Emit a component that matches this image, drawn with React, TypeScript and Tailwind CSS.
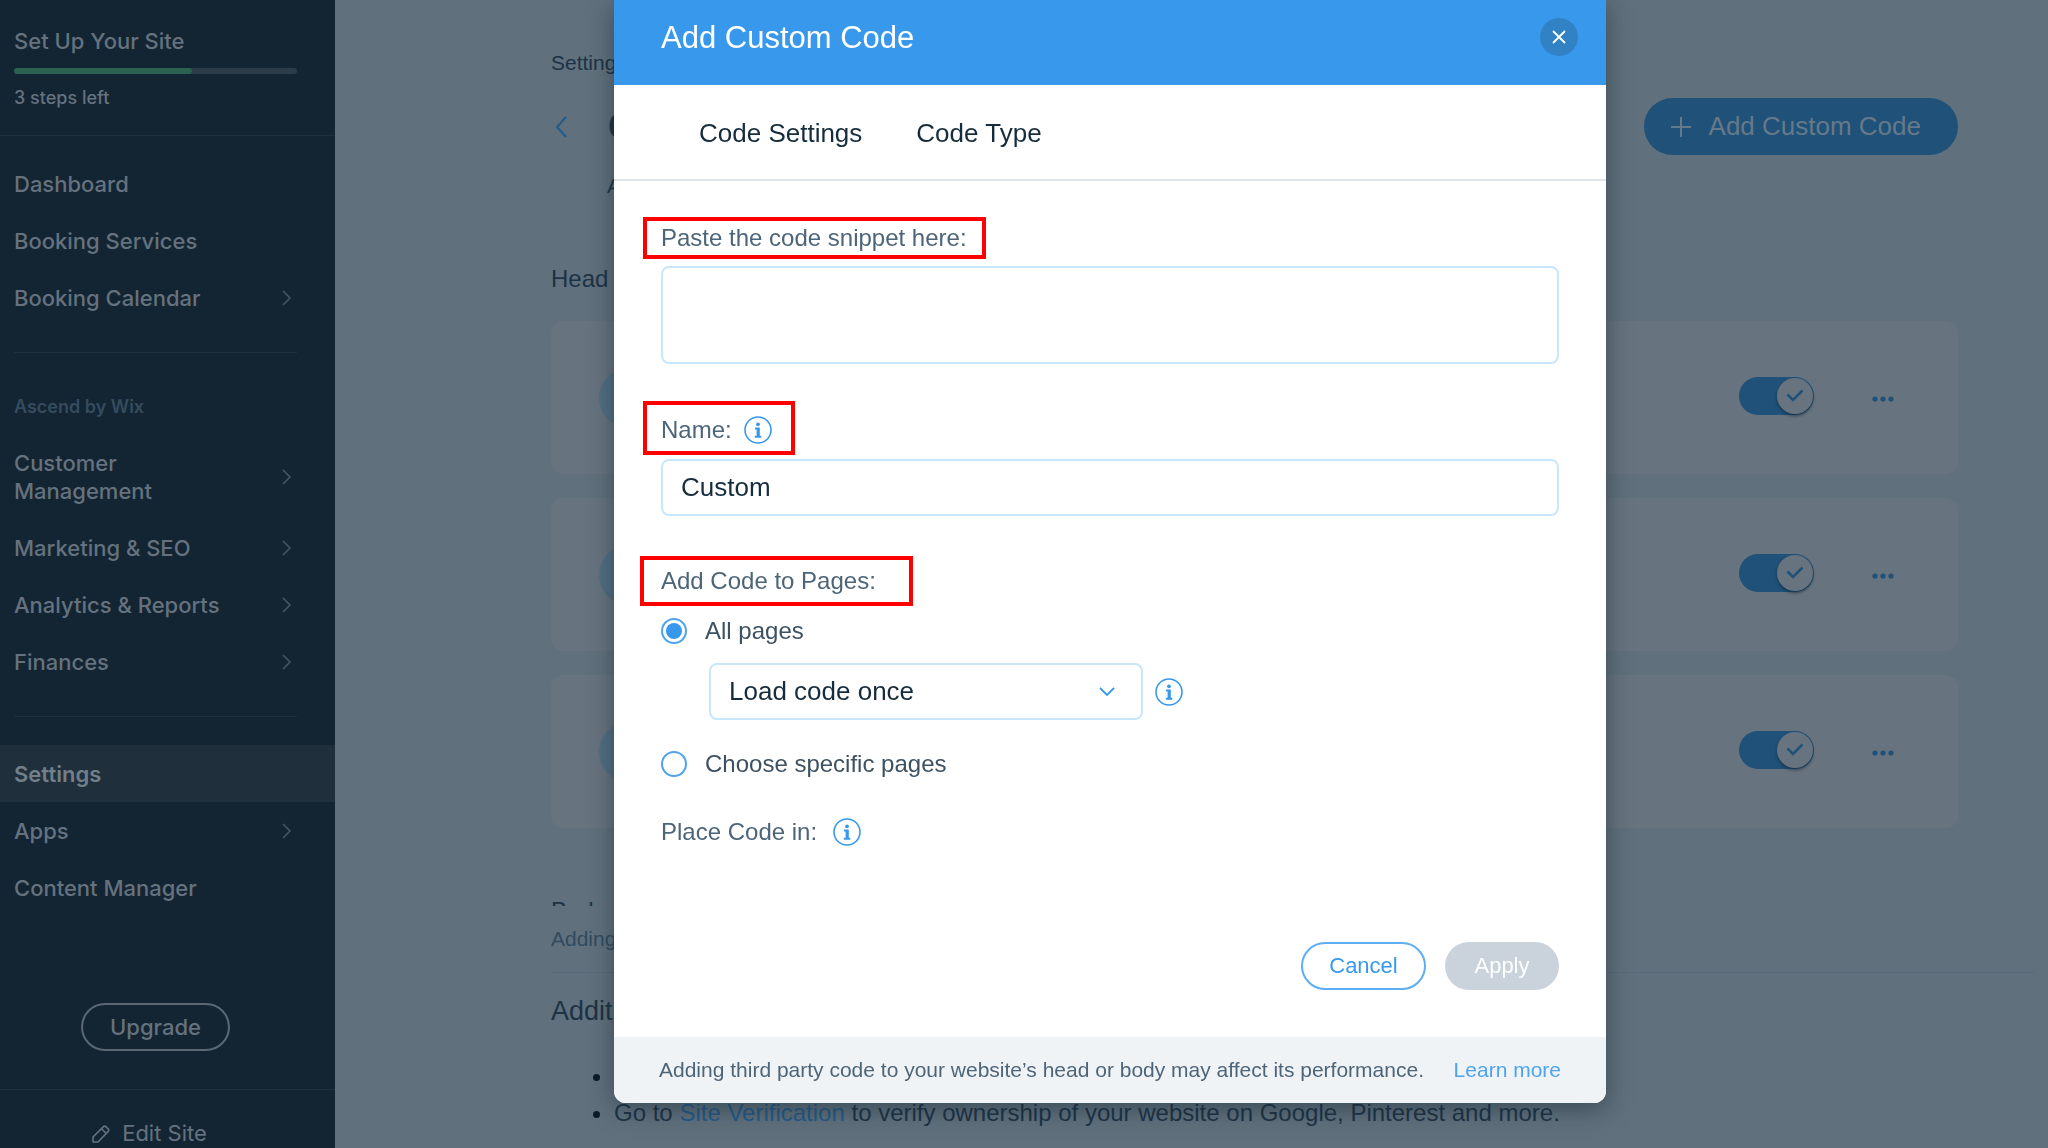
import {useState} from 'react'
import {clsx} from 'clsx'

interface NavItemProps {
	label: string
	hasChildren?: boolean
	active?: boolean
}

const NavItem = ({label, hasChildren, active}: NavItemProps) => (
	<a
		href="#"
		className={clsx(
			'flex min-h-[57px] items-center justify-between py-3.5 pr-[43px] pl-3.5 text-[22px] leading-7',
			active ? 'bg-[#1f2f3c] font-semibold text-[#717f8b]' : 'font-medium text-[#65727e]'
		)}
	>
		<span className="max-w-[210px]">{label}</span>
		{hasChildren && (
			<svg className="h-[18px] w-2.5 shrink-0 text-[#475663]" viewBox="0 0 10 18" fill="none" stroke="currentColor" strokeWidth="1.5">
				<path d="M1 2l7 7-7 7" />
			</svg>
		)}
	</a>
)

const Divider = () => <hr className="mt-[26px] mr-[38px] mb-7 ml-3.5 border-[#1f303d]" />

const Sidebar = () => (
	<aside className="flex w-[335px] shrink-0 flex-col bg-[#132533] font-['Inter',sans-serif] text-[#65727e]">
		<div className="flex h-[136px] flex-col border-b border-[#1f303d] pt-[27px] pr-[38px] pl-3.5">
			<div className="text-[22px] leading-7 font-medium">Set Up Your Site</div>
			<div className="mt-[13px] h-1.5 rounded-full bg-[#2d3c49]">
				<div className="h-full w-[63%] rounded-full bg-[#2b6151]" />
			</div>
			<div className="mt-2.5 text-lg leading-7 font-medium">3 steps left</div>
		</div>

		<nav className="pt-[19px]">
			<NavItem label="Dashboard" />
			<NavItem label="Booking Services" />
			<NavItem label="Booking Calendar" hasChildren />
			<Divider />
			<h2 className="flex h-[54px] items-center pb-0.5 pl-3.5 text-lg font-semibold text-[#354c5f]">Ascend by Wix</h2>
			<NavItem label="Customer Management" hasChildren />
			<NavItem label="Marketing & SEO" hasChildren />
			<NavItem label="Analytics & Reports" hasChildren />
			<NavItem label="Finances" hasChildren />
			<Divider />
			<NavItem label="Settings" active />
			<NavItem label="Apps" hasChildren />
			<NavItem label="Content Manager" />
		</nav>

		<div className="mt-auto flex flex-col items-center">
			<button type="button" className="mr-6 mb-[38px] h-12 w-[149px] rounded-full border-2 border-[#5b6874] text-[22px] font-medium">
				Upgrade
			</button>
			<a href="#" className="flex h-[59px] w-full items-center justify-center gap-3 border-t border-[#1f303d] pt-[29px] pr-9 text-[22px]">
				<svg className="h-[18px] w-[18px]" viewBox="0 0 18 18" fill="none" stroke="currentColor" strokeWidth="1.6" strokeLinejoin="round">
					<path d="M1 17v-5L11.500 1.600a1.600 1.600 0 0 1 2.300 0l2.500 2.500a1.600 1.600 0 0 1 0 2.300L6 17z" />
					<path d="M9.500 3.700l4.700 4.700" />
				</svg>
				Edit Site
			</a>
		</div>
	</aside>
)

const SnippetCard = ({name}: {name: string}) => {
	const [enabled, setEnabled] = useState(true)

	return (
		<div className="flex h-[153px] items-center rounded-xl bg-[#67737e] pr-[63px] pb-1 pl-12">
			<span className="mt-1 size-[60px] rounded-full bg-[#536e82]" />
			<button
				type="button"
				role="switch"
				aria-label={name}
				aria-checked={enabled}
				onClick={() => setEnabled(!enabled)}
				className={clsx(
					'ml-auto flex h-[38px] w-[75px] items-center rounded-full px-px',
					enabled ? 'justify-end bg-[#1f5179]' : 'justify-start bg-[#4d5b67]'
				)}
			>
				<span className="flex size-9 items-center justify-center rounded-full bg-[#67737e] shadow-[0_2px_3px_rgba(19,37,51,0.6)]">
					<svg className="h-3.5 w-[18px] text-[#1f5179]" viewBox="0 0 18 14" fill="none" stroke="currentColor" strokeWidth="2.5">
						<path d="M1.500 5.500l5.500 5.500L16.500 1.500" />
					</svg>
				</span>
			</button>
			<button type="button" aria-label="More actions" className="ml-[57px] pt-1.5 text-[#1f5179]">
				<svg className="h-1.5 w-6" viewBox="0 0 24 6" fill="currentColor">
					<circle cx="4" cy="3" r="2.600" />
					<circle cx="12" cy="3" r="2.600" />
					<circle cx="20" cy="3" r="2.600" />
				</svg>
			</button>
		</div>
	)
}

const SettingsPage = () => (
	<main className="flex min-w-0 flex-1 flex-col bg-[#60707c] text-[#1d3345]">
		<div className="min-h-0 flex-1 overflow-hidden pr-[90px] pl-[216px]">
			<div className="pt-[49px] text-[21px] leading-7">Settings</div>
			<div className="mt-[21px] flex items-center">
				<button type="button" aria-label="Back" className="mr-[41px] ml-1 text-[#1f5c8e]">
					<svg className="h-[22px] w-3" viewBox="0 0 12 22" fill="none" stroke="currentColor" strokeWidth="2">
						<path d="M11 1L2 11l9 10" />
					</svg>
				</button>
				<h1 className="text-4xl font-bold">Custom Code</h1>
				<button type="button" className="ml-auto flex h-[57px] items-center gap-[18px] rounded-full bg-[#1f5179] pr-[37px] pl-[27px] text-[26px] text-[#66798a]">
					<svg className="size-5" viewBox="0 0 20 20" fill="none" stroke="currentColor" strokeWidth="2">
						<path d="M10 0v20M0 10h20" />
					</svg>
					Add Custom Code
				</button>
			</div>
			<p className="mt-[17px] pl-14 text-[21px] leading-7">Add code</p>

			<h2 className="mt-[65px] text-2xl leading-7">Head</h2>
			<div className="mt-7 flex flex-col gap-6">
				<SnippetCard name="Snippet one" />
				<SnippetCard name="Snippet two" />
				<SnippetCard name="Snippet three" />
			</div>
			<h2 className="mt-[69px] text-2xl leading-7">Body</h2>
		</div>

		<section className="h-[242px] shrink-0 pr-3.5 pl-[216px]">
			<p className="h-[67px] border-b border-[#57697a] pt-[19px] text-[21px] leading-7 text-[#324b5f]">Adding code</p>
			<h2 className="mt-5 text-[27px] leading-9">Additional</h2>
			<ul className="mt-7 list-disc pl-[63px] text-2xl leading-[37px] marker:text-[#0e1c28]">
				<li>Go to</li>
				<li>
					Go to <a href="#" className="text-[#255a87]">Site Verification</a> to verify ownership of your website on Google, Pinterest and more.
				</li>
			</ul>
		</section>
	</main>
)

const InfoIcon = () => (
	<svg className="size-7 shrink-0 text-[#3899ec]" viewBox="0 0 28 28" fill="none" stroke="currentColor" strokeWidth="1.600" aria-hidden="true">
		<circle cx="14" cy="14" r="13" />
		<g fill="currentColor" stroke="none">
			<circle cx="14" cy="8.300" r="1.900" />
			<path d="M11 11.500h4.800v8.300h1.500v2h-6.500v-2h1.800v-6.300H11z" />
		</g>
	</svg>
)

const fieldClasses = 'rounded-lg border-2 border-[#c8e6fc] bg-white text-[26px] text-[#162d3d] outline-none focus:border-[#3899ec]'
const radioClasses =
	'size-[26px] shrink-0 appearance-none rounded-full border-2 border-[#4da4ef] bg-clip-content p-[3px] checked:bg-[#3899ec]'

const AddCodeModal = () => {
	const [code, setCode] = useState('')
	const [name, setName] = useState('Custom')
	const [pages, setPages] = useState('all')

	return (
		<div role="dialog" aria-labelledby="modal-title" className="w-[992px] overflow-hidden rounded-b-xl bg-white shadow-[0_6px_24px_rgba(19,37,51,0.5)]">
			<header className="flex h-[85px] items-start justify-between bg-[#3899ec] pt-[18px] pr-7 pl-[47px] text-white">
				<h2 id="modal-title" className="text-[31px] leading-10">Add Custom Code</h2>
				<button type="button" aria-label="Close" className="flex size-[38px] items-center justify-center rounded-full bg-[#3182c4]">
					<svg className="size-3.5" viewBox="0 0 14 14" fill="none" stroke="currentColor" strokeWidth="1.800">
						<path d="M1 1l12 12M13 1L1 13" />
					</svg>
				</button>
			</header>

			<div className="flex h-24 items-center gap-[54px] border-b-2 border-[#dfe5eb] pt-0.5 pl-[85px] text-[26px] text-[#162d3d]">
				<button type="button">Code Settings</button>
				<button type="button">Code Type</button>
			</div>

			<form className="px-[47px] pb-[47px] text-2xl text-[#4d6579]" onSubmit={e => e.preventDefault()}>
				<label htmlFor="snippet" className="mt-9 -ml-[18px] flex h-[42px] w-[343px] items-center border-4 border-[#fe0000] pl-3.5 whitespace-nowrap">
					Paste the code snippet here:
				</label>
				<textarea
					id="snippet"
					value={code}
					onChange={e => setCode(e.target.value)}
					className={clsx(fieldClasses, 'mt-[7px] block h-[98px] w-full resize-none px-[18px] py-3')}
				/>

				<label htmlFor="name" className="mt-[37px] -ml-[18px] flex h-[54px] w-[152px] items-center gap-3 border-4 border-[#fe0000] pt-1 pl-3.5">
					Name: <InfoIcon />
				</label>
				<input
					id="name"
					value={name}
					onChange={e => setName(e.target.value)}
					className={clsx(fieldClasses, 'mt-1 block h-[57px] w-full px-[18px]')}
				/>

				<div role="radiogroup" aria-labelledby="pages-title" className="pt-10">
					<div id="pages-title" className="-ml-[21px] flex h-[50px] w-[273px] items-center border-4 border-[#fe0000] pl-[17px]">
						Add Code to Pages:
					</div>
					<label className="mt-[7px] flex h-9 items-center gap-[18px] text-[#3d5162]">
						<input type="radio" name="pages" checked={pages === 'all'} onChange={() => setPages('all')} className={radioClasses} />
						All pages
					</label>
					<div className="mt-3.5 flex items-center gap-3 pl-12">
						<div className="relative w-[434px]">
							<select aria-label="Load code" className={clsx(fieldClasses, 'h-[57px] w-full appearance-none px-[18px]')}>
								<option>Load code once</option>
								<option>Load code on each new page</option>
							</select>
							<svg className="pointer-events-none absolute top-6 right-7 h-2.5 w-4 text-[#3899ec]" viewBox="0 0 16 10" fill="none" stroke="currentColor" strokeWidth="1.800">
								<path d="M1 1l7 7 7-7" />
							</svg>
						</div>
						<InfoIcon />
					</div>
					<label className="mt-[26px] flex h-9 items-center gap-[18px] text-[#3d5162]">
						<input type="radio" name="pages" checked={pages === 'specific'} onChange={() => setPages('specific')} className={radioClasses} />
						Choose specific pages
					</label>
				</div>

				<div className="mt-8 flex h-9 items-center gap-4">
					Place Code in: <InfoIcon />
				</div>

				<div className="mt-[92px] flex justify-end gap-[19px] text-[22px]">
					<button type="button" className="h-12 w-[125px] rounded-full border-2 border-[#5eaef3] text-[#3899ec]">Cancel</button>
					<button type="submit" disabled className="h-12 w-[114px] rounded-full bg-[#cad3dc] text-white">Apply</button>
				</div>
			</form>

			<footer className="flex h-[66px] items-center justify-between gap-1.5 bg-[#f0f3f6] px-[45px] text-[21px] whitespace-nowrap text-[#4d6579]">
				<span>Adding third party code to your website’s head or body may affect its performance.</span>
				<a href="#" className="text-[#4da4ef]">Learn more</a>
			</footer>
		</div>
	)
}

const App = () => (
	<div className="flex h-screen overflow-hidden font-['Liberation_Sans',sans-serif]">
		<Sidebar />
		<SettingsPage />
		<div className="fixed inset-0 flex items-start justify-center pl-[172px]">
			<AddCodeModal />
		</div>
	</div>
)

export default App
